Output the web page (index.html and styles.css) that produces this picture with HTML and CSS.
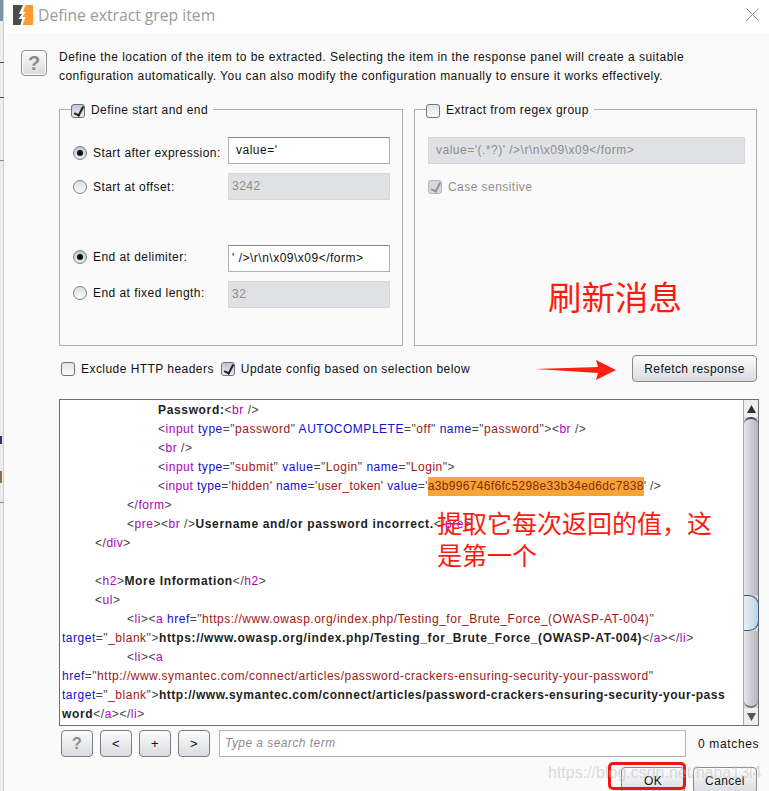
FILE: index.html
```html
<!DOCTYPE html>
<html lang="en">
<head>
<meta charset="utf-8">
<title>Define extract grep item</title>
<link rel="stylesheet" href="styles.css">
</head>
<body>
<div class="screen">
  <div class="behind">
    <span class="mark m1"></span><span class="mark m2"></span><span class="mark m3"></span>
    <span class="rule r1"></span><span class="rule r2"></span><span class="rule r3"></span><span class="rule r4"></span>
  </div>
  <div class="dialog">
    <header class="titlebar">
      <svg class="logo" width="20" height="20" viewBox="0 0 20 20"><rect width="20" height="20" fill="#4d4d4d"/><path d="M10 0H20V20H9L12 12H9L12 7H9.500L12 0Z" fill="#ff9a2e"/><path d="M10 0L6 9H9L5.500 14H9L7.500 20H9.500L12.500 12H9.500L12.500 7H10L12.500 0Z" fill="#fff"/></svg>
      <h1 class="title">Define extract grep item</h1>
      <svg class="close" width="13" height="13" viewBox="0 0 13 13"><path d="M.5.5L12.500 12.500M12.500.5L.5 12.500" stroke="#8f8f8f" fill="none"/></svg>
    </header>
    <main class="body">
      <section class="intro">
        <span class="help-big">?</span>
        <p class="intro-text">Define the location of the item to be extracted. Selecting the item in the response panel will create a suitable<br>configuration automatically. You can also modify the configuration manually to ensure it works effectively.</p>
      </section>

      <section class="panels">
        <fieldset class="panel">
          <legend class="legend"><span class="check on"></span>Define start and end</legend>
          <div class="field down"><span class="radio on"></span><label class="flabel">Start after expression:</label><span class="input">value='</span></div>
          <div class="field f2"><span class="radio"></span><label class="flabel">Start at offset:</label><span class="input off tight">3242</span></div>
          <div class="field f3 up"><span class="radio on"></span><label class="flabel">End at delimiter:</label><span class="input tight">' /&gt;\r\n\x09\x09&lt;/form&gt;</span></div>
          <div class="field f2 up2"><span class="radio"></span><label class="flabel">End at fixed length:</label><span class="input off tight">32</span></div>
        </fieldset>
        <fieldset class="panel">
          <legend class="legend"><span class="check"></span>Extract from regex group</legend>
          <span class="input off wide">value='(.*?)' /&gt;\r\n\x09\x09&lt;/form&gt;</span>
          <div class="case"><span class="check on dim"></span>Case sensitive</div>
        </fieldset>
      </section>

      <section class="options">
        <span class="opt"><span class="check"></span>Exclude HTTP headers</span>
        <span class="opt"><span class="check on"></span>Update config based on selection below</span>
        <button class="btn refetch">Refetch response</button>
      </section>

      <section class="editor">
        <div class="code">
          <div class="ln i4"><b>Password:</b>&lt;<i>br</i> /&gt;</div>
          <div class="ln i4">&lt;<i>input</i> <u>type</u>="<em>password</em>" <u>AUTOCOMPLETE</u>="<em>off</em>" <u>name</u>="<em>password</em>"&gt;&lt;<i>br</i> /&gt;</div>
          <div class="ln i4">&lt;<i>br</i> /&gt;</div>
          <div class="ln i4">&lt;<i>input</i> <u>type</u>="<em>submit</em>" <u>value</u>="<em>Login</em>" <u>name</u>="<em>Login</em>"&gt;</div>
          <div class="ln i4 snug">&lt;<i>input</i> <u>type</u>='<em>hidden</em>' <u>name</u>='<em>user_token</em>' <u>value</u>='<em class="hit">a3b996746f6fc5298e33b34ed6dc7838</em>' /&gt;</div>
          <div class="ln i3">&lt;/<i>form</i>&gt;</div>
          <div class="ln i3">&lt;<i>pre</i>&gt;&lt;<i>br</i> /&gt;<b>Username and/or password incorrect.</b>&lt;/<i>pre</i>&gt;</div>
          <div class="ln i2">&lt;/<i>div</i>&gt;</div>
          <div class="ln"></div>
          <div class="ln i2">&lt;<i>h2</i>&gt;<b>More Information</b>&lt;/<i>h2</i>&gt;</div>
          <div class="ln i2">&lt;<i>ul</i>&gt;</div>
          <div class="ln i3">&lt;<i>li</i>&gt;&lt;<i>a</i> <u>href</u>="<em>https://www.owasp.org/index.php/Testing_for_Brute_Force_(OWASP-AT-004)</em>"</div>
          <div class="ln"><u>target</u>="<em>_blank</em>"&gt;<b>https://www.owasp.org/index.php/Testing_for_Brute_Force_(OWASP-AT-004)</b>&lt;/<i>a</i>&gt;&lt;/<i>li</i>&gt;</div>
          <div class="ln i3">&lt;<i>li</i>&gt;&lt;<i>a</i></div>
          <div class="ln"><u>href</u>="<em>http://www.symantec.com/connect/articles/password-crackers-ensuring-security-your-password</em>"</div>
          <div class="ln"><u>target</u>="<em>_blank</em>"&gt;<b class="long">http://www.symantec.com/connect/articles/password-crackers-ensuring-security-your-pass</b></div>
          <div class="ln"><b>word</b>&lt;/<i>a</i>&gt;&lt;/<i>li</i>&gt;</div>
        </div>
        <div class="scrollbar">
          <span class="arrow"><svg width="9" height="8" viewBox="0 0 9 8"><path d="M4.500 0L9 8H0Z" fill="#333"/></svg></span>
          <span class="track t1"></span>
          <span class="thumb"></span>
          <span class="track t2"></span>
          <span class="arrow"><svg width="9" height="8" viewBox="0 0 9 8"><path d="M4.500 8L9 0H0Z" fill="#555"/></svg></span>
        </div>
      </section>

      <section class="search">
        <button class="btn small q">?</button>
        <button class="btn small">&lt;</button>
        <button class="btn small">+</button>
        <button class="btn small">&gt;</button>
        <span class="search-input">Type a search term</span>
        <span class="matches">0 matches</span>
      </section>

      <footer class="actions">
        <button class="btn action">OK</button>
        <button class="btn action">Cancel</button>
      </footer>
    </main>
  </div>

  <div class="note note-refresh">刷新消息</div>
  <div class="note note-extract">提取它每次返回的值，这<br>是第一个</div>
  <svg class="red-arrow" width="82" height="22" viewBox="0 0 82 22"><path d="M0 10L63 8L61 1L81 11L61 21L63 14Z" fill="#ff2015"/></svg>
  <div class="ok-ring"></div>
  <div class="watermark">https://blog.csdn.net/haha13l4</div>
</div>
</body>
</html>
```
FILE: styles.css
```css
* { box-sizing: border-box; }
html, body { margin: 0; padding: 0; }
body { width: 769px; height: 791px; overflow: hidden; font-family: "Liberation Sans", Arial, sans-serif; font-size: 12px; color: #111; }

.screen { position: relative; width: 769px; height: 791px; display: flex; overflow: hidden; background: #fafafa; }

.behind { position: relative; flex: 0 0 4px; background: linear-gradient(90deg, #ececec 0 70%, #b8b8b8); }
.mark { position: absolute; left: 0; width: 2px; }
.m1 { top: 0; height: 21px; width: 3px; background: #7f93a6; }
.m2 { top: 436px; height: 8px; background: #3a2a6a; }
.m3 { top: 471px; height: 12px; background: #8a7050; }
.rule { position: absolute; left: 0; width: 4px; height: 1px; background: #8c8c8c; }
.r1 { top: 62px; background: #3d4f6a; } .r2 { top: 97px; background: #3d4f6a; } .r3 { top: 160px; } .r4 { top: 502px; }

.dialog { flex: 1; display: flex; flex-direction: column; min-width: 0; }

.titlebar { flex: 0 0 33px; background: #fff; display: flex; align-items: center; padding: 0 9px 0 9px; }
.logo { margin-top: -3px; }
.title { margin: -3px 0 0 5px; font: 400 15.700px "Open Sans", sans-serif; color: #9a9a9a; flex: 1; }
.close { margin-top: -5px; margin-right: 1px; }

.body { flex: 1; background: #fafafa; padding: 15px 8px 0 17px; display: flex; flex-direction: column; min-height: 0; overflow: hidden; }
.body > * { flex: none; }

.intro { display: flex; align-items: flex-start; height: 54px; }
.help-big { width: 26px; height: 26px; margin-top: 2px; border: 1px solid #8e8e8e; border-radius: 4px; background: linear-gradient(#fbfbfb, #d8dade); color: #8c8c8c; font: 700 20px/24px "Liberation Sans", sans-serif; text-align: center; box-shadow: inset 0 0 0 1px #fff; }
.intro-text { margin: 0 0 0 12px; line-height: 19px; letter-spacing: .465px; white-space: nowrap; }

.panels { display: flex; gap: 11px; margin-left: 38px; height: 244px; width: 698px; }
.panel { flex: 0 0 344px; margin: 0; padding: 0; height: 244px; border: 1px solid #aeaeae; border-radius: 0; min-width: 0; position: relative; }
.panel + .panel { flex-basis: 343px; }
.legend { margin-left: 11px; padding: 2px 5px 0 0; height: 15px; line-height: 13px; display: flex; align-items: center; letter-spacing: .45px; }
.legend .check { margin-right: 6px; }

.check { display: inline-block; position: relative; width: 14px; height: 14px; flex: none; border: 1px solid #70757c; border-radius: 3px; background: linear-gradient(#e3e4e8, #fbfbfb); }
.check.on { background: linear-gradient(#bcc6d4, #e9ecf2); }
.check.on::after { content: ""; position: absolute; left: 4px; top: 0; width: 4px; height: 9px; border: solid #222; border-width: 0 2px 2px 0; transform: rotate(28deg); }
.check.dim { border-color: #b4b8bd; background: #d5d8dd; }
.check.dim::after { border-color: #8f9296; }

.radio { display: inline-block; position: relative; width: 14px; height: 14px; flex: none; border: 1px solid #7a7f86; border-radius: 50%; background: linear-gradient(#dcdee2, #fbfbfb); }
.radio.on { background: linear-gradient(#b9c3d1, #e9ecf1); }
.radio.on::after { content: ""; position: absolute; left: 3px; top: 3px; width: 6px; height: 6px; border-radius: 50%; background: #111; }

.field { display: flex; align-items: center; height: 27px; margin: 20px 0 0 13px; }
.f2 { margin-top: 9px; }
.f3 { margin-top: 45px; }
.flabel { margin-left: 6px; width: 135px; letter-spacing: .45px; white-space: nowrap; }
.down .radio, .down .flabel { margin-top: 4px; }
.up .radio, .up .flabel { margin-bottom: 3px; }
.up2 .radio, .up2 .flabel { margin-bottom: 4px; }
.input { display: block; width: 162px; height: 27px; padding: 0 7px; border: 1px solid #b0b0b0; border-top-color: #8a8a8a; background: #fff; line-height: 24px; white-space: nowrap; overflow: hidden; letter-spacing: .5px; }
.input.tight { padding: 0 3px; }
.input.off { background: #dfe1e5; border-color: #d6d8dc; color: #8d8d8d; }
.input.wide { width: 317px; margin: 20px 0 0 13px; }
.case { display: flex; align-items: center; gap: 6px; margin: 9px 0 0 13px; height: 27px; color: #8f8f8f; letter-spacing: .45px; }

.options { display: flex; align-items: center; height: 27px; margin: 9px 0 0 40px; letter-spacing: .45px; }
.opt { display: flex; align-items: center; gap: 6px; margin-right: 7px; white-space: nowrap; }
.btn { font: 12px "Liberation Sans", sans-serif; color: #111; border: 1px solid #8a8a8a; border-radius: 4px; background: linear-gradient(#fcfcfc, #d9dbe0); padding: 0; letter-spacing: .4px; }
.refetch { margin-left: auto; margin-right: 4px; width: 125px; height: 27px; }

.editor { display: flex; height: 327px; width: 700px; margin: 17px 0 0 38px; border: 1px solid #6e6e6e; background: #fff; }
.code { flex: 1; min-width: 0; overflow: hidden; padding: 1px 0 0 2px; color: #444; }
.ln { height: 19px; line-height: 19px; white-space: nowrap; letter-spacing: .52px; }
.snug { letter-spacing: .38px; }
.i2 { padding-left: 33px; } .i3 { padding-left: 65px; } .i4 { padding-left: 96px; }
.ln b { font-weight: 700; color: #222; letter-spacing: .65px; }
.ln b.long { letter-spacing: .525px; }
.ln i { font-style: normal; color: #b000c0; }
.ln u { text-decoration: none; color: #1111cc; }
.ln em { font-style: normal; color: #a31515; }
.ln .hit { display: inline-block; background: #f3a636; line-height: 19px; letter-spacing: .32px; color: #8e2410; }

.scrollbar { flex: 0 0 15px; display: flex; flex-direction: column; background: #d3d4d9; border-left: 1px solid #aaa; }
.arrow { flex: 0 0 17px; display: flex; align-items: center; justify-content: center; background: #eceef0; }
.track { background: linear-gradient(90deg, #e6e7ea, #b4b6bc); }
.t1 { flex: 0 0 178px; border-radius: 8px 8px 0 0; border-top: 2px solid #444; }
.thumb { flex: 0 0 36px; margin-right: -1px; background: linear-gradient(90deg, #e8f0f8, #b9d4ea); border: 1px solid #3e5c75; border-left: 0; border-radius: 0 10px 10px 0; }
.t2 { flex: 1; border-radius: 0 0 8px 8px; border-bottom: 2px solid #777; }

.search { display: flex; align-items: center; height: 27px; margin: 4px 0 0 40px; gap: 7px; }
.small { width: 32px; height: 27px; font-size: 13px; border-color: #7d7f84; }
.q { color: #8c8c8c; font-weight: 700; font-size: 16px; }
.search-input { width: 467px; margin-left: 2px; height: 27px; padding-left: 5px; border: 1px solid #b3b3b3; background: #fff; font-style: italic; color: #8c8c8c; line-height: 25px; letter-spacing: .45px; }
.matches { margin-left: 5px; white-space: nowrap; letter-spacing: .65px; }

.actions { display: flex; justify-content: flex-end; gap: 8px; margin: 10px 4px 0 0; }
.action { width: 64px; height: 27px; flex: none; }

.note { position: absolute; color: #ff1a0f; font-family: "Noto Sans CJK SC", sans-serif; white-space: nowrap; }
.note-refresh { left: 548px; top: 273px; font-size: 33.500px; line-height: 46px; }
.note-extract { left: 437px; top: 506px; font-size: 25px; line-height: 32px; }
.red-arrow { position: absolute; left: 535px; top: 359px; }
.ok-ring { position: absolute; left: 608px; top: 762px; width: 78px; height: 28px; border: 3px solid #f01414; border-radius: 5px; }
.watermark { position: absolute; left: 548px; top: 761px; font-size: 16px; line-height: 24px; color: rgba(190,190,190,.55); white-space: nowrap; }
```
